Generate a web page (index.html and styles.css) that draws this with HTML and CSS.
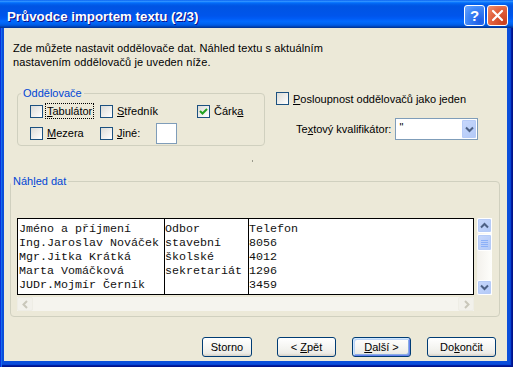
FILE: index.html
```html
<!DOCTYPE html>
<html lang="cs">
<head>
    <meta charset="UTF-8">
    <meta name="viewport" content="width=device-width, initial-scale=1.0">
    <title>Průvodce importem textu (2/3)</title>
    <link rel="stylesheet" href="styles.css">
</head>
<body>
    <div class="window">
        <div class="titlebar">
            <span class="title">Průvodce importem textu (2/3)</span>
            <span class="cap-btn help">?</span>
            <span class="cap-btn close">
                <svg width="19" height="19" viewBox="0 0 19 19"><path d="M5 5 L14 14 M14 5 L5 14" stroke="#fff" stroke-width="2.2" stroke-linecap="round"/></svg>
            </span>
        </div>

        <div class="frame">
            <div class="client">
                <p class="intro">Zde můžete nastavit oddělovače dat. Náhled textu s aktuálním<br>nastavením oddělovačů je uveden níže.</p>

                <div class="options">
                    <fieldset class="group sep-group">
                        <legend>Oddělovače</legend>
                        <div class="check-grid">
                            <label class="check"><span class="box"></span><span class="text focused"><u>T</u>abulátor</span></label>
                            <label class="check"><span class="box"></span><span class="text"><u>S</u>tředník</span></label>
                            <label class="check">
                                <span class="box">
                                    <svg width="11" height="11" viewBox="0 0 11 11"><path d="M2 5 L4.5 7.5 L9 3" fill="none" stroke="#21A121" stroke-width="2"/></svg>
                                </span>
                                <span class="text">Čárk<u>a</u></span>
                            </label>
                            <label class="check"><span class="box"></span><span class="text"><u>M</u>ezera</span></label>
                            <label class="check"><span class="box"></span><span class="text"><u>J</u>iné:</span><span class="textbox"></span></label>
                        </div>
                    </fieldset>

                    <div class="side">
                        <label class="check"><span class="box"></span><span class="text"><u>P</u>osloupnost oddělovačů jako jeden</span></label>
                        <div class="qualifier">
                            <span>Te<u>x</u>tový kvalifikátor:</span>
                            <div class="combo">
                                <span class="combo-text">"</span>
                                <span class="xp-btn combo-btn">
                                    <svg width="9" height="7" viewBox="0 0 9 7"><path d="M1 1.5 L4.5 5 L8 1.5" fill="none" stroke="#4D6185" stroke-width="2"/></svg>
                                </span>
                            </div>
                        </div>
                    </div>
                </div>

                <div class="spacer"><span class="dot"></span></div>

                <fieldset class="group preview-group">
                    <legend>Náh<u>l</u>ed dat</legend>
                    <div class="preview-area">
                        <div class="preview-row">
                            <div class="preview">
                                <div class="col col-name">Jméno a příjmení
Ing.Jaroslav Nováček
Mgr.Jitka Krátká
Marta Vomáčková
JUDr.Mojmír Černík</div>
                                <div class="col col-dept">Odbor
stavební
školské
sekretariát</div>
                                <div class="col col-phone">Telefon
8056
4012
1296
3459</div>
                            </div>
                            <div class="vscroll">
                                <span class="xp-btn sb-btn">
                                    <svg width="9" height="7" viewBox="0 0 9 7"><path d="M1 5.5 L4.5 2 L8 5.5" fill="none" stroke="#4D6185" stroke-width="2"/></svg>
                                </span>
                                <span class="xp-btn thumb">
                                    <svg width="7" height="8" viewBox="0 0 7 8"><path d="M0 1.5 H7 M0 3.5 H7 M0 5.5 H7 M0 7.5 H7" stroke="#8CB0F8" stroke-width="1"/></svg>
                                </span>
                                <span class="track"></span>
                                <span class="xp-btn sb-btn">
                                    <svg width="9" height="7" viewBox="0 0 9 7"><path d="M1 1.5 L4.5 5 L8 1.5" fill="none" stroke="#4D6185" stroke-width="2"/></svg>
                                </span>
                            </div>
                        </div>
                        <div class="hscroll">
                            <span class="sb-off">
                                <svg width="7" height="9" viewBox="0 0 7 9"><path d="M5 1 L1.5 4.5 L5 8" fill="none" stroke="#C9C7BA" stroke-width="2"/></svg>
                            </span>
                            <span class="sb-off">
                                <svg width="7" height="9" viewBox="0 0 7 9"><path d="M2 1 L5.5 4.5 L2 8" fill="none" stroke="#C9C7BA" stroke-width="2"/></svg>
                            </span>
                        </div>
                    </div>
                </fieldset>

                <div class="buttons">
                    <button class="btn btn-cancel">Storno</button>
                    <button class="btn btn-back">&lt; <u>Z</u>pět</button>
                    <button class="btn btn-next default"><u>D</u>alší &gt;</button>
                    <button class="btn btn-finish">Do<u>k</u>ončit</button>
                </div>
            </div>
        </div>
    </div>
</body>
</html>
```

FILE: styles.css
```css
body {
    margin: 0;
    font-family: "Liberation Sans", Arial, sans-serif;
    font-size: 11px;
    color: #000;
    background: #fff;
}

.window {
    width: 513px;
    height: 367px;
    display: flex;
    flex-direction: column;
}

/* title bar */
.titlebar {
    height: 28px;
    box-sizing: border-box;
    display: flex;
    align-items: flex-start;
    padding: 5px 5px 0 7px;
    background: linear-gradient(#0058EE 0%, #3593FF 4%, #288EFF 6%, #127DFF 8%, #036FFC 10%, #0262EE 14%, #0057E5 20%, #0054E3 24%, #0055EB 56%, #005BF5 66%, #026AFE 76%, #0062EF 86%, #0052D6 92%, #0040AB 96%, #003092 100%);
}

.title {
    flex: 1;
    color: #fff;
    font-weight: bold;
    font-size: 13.3px;
    line-height: 23px;
    text-shadow: 1px 1px #0F1089;
}

.cap-btn {
    width: 21px;
    height: 21px;
    box-sizing: border-box;
    border: 1px solid #fff;
    border-radius: 3px;
    display: flex;
    align-items: center;
    justify-content: center;
}

.help {
    background: radial-gradient(circle at 80% 80%, #1C5CE6 0%, #3E86F7 60%, #6BA6FF 100%);
    color: #fff;
    font-weight: bold;
    font-size: 15px;
    line-height: 19px;
}

.close {
    margin-left: 2px;
    background: radial-gradient(circle at 85% 85%, #C9401F 0%, #E1603D 55%, #F0926F 100%);
}

/* frame + client */
.frame {
    flex: 1;
    display: flex;
    padding: 0 6px 6px 4px;
    background: #0A4EDB;
    box-shadow: inset 1px 0 #0831D9, inset 2px 0 #166AEE, inset -1px -1px #00138C, inset -2px -2px #001EA0, inset -3px -3px #0846D5;
}

.client {
    flex: 1;
    background: #ECE9D8;
}

.intro {
    margin: 13px 0 0 9px;
    line-height: 14px;
    letter-spacing: 0.1px;
}

.options {
    display: flex;
    align-items: flex-start;
    margin-top: 18px;
    padding-left: 13px;
}

.group {
    margin: 0;
    padding: 0;
    border: 1px solid #D0D0BF;
    border-radius: 4px;
    min-width: 0;
    box-sizing: border-box;
}

.group legend {
    padding: 0 2px;
    line-height: 12px;
    color: #0046D5;
}

.sep-group {
    width: 248px;
    padding: 1px 0 1px 0;
}

.sep-group legend {
    margin-left: 3px;
}

.check-grid {
    display: grid;
    grid-template-columns: 70px 97px auto;
    grid-auto-rows: 22px;
    align-items: center;
    padding-left: 12px;
}

.check {
    display: flex;
    align-items: center;
}

.box {
    width: 13px;
    height: 13px;
    box-sizing: border-box;
    border: 1px solid #1C5180;
    background: linear-gradient(135deg, #DCDCD7, #FFFFFF);
    flex: none;
    display: flex;
    align-items: center;
    justify-content: center;
}

.text {
    margin-left: 2px;
    padding: 0 1px;
    border: 1px dotted transparent;
    line-height: 14px;
    white-space: nowrap;
}

.focused {
    border-color: #000;
}

.textbox {
    width: 21px;
    height: 21px;
    box-sizing: border-box;
    margin-left: 14px;
    border: 1px solid #7F9DB9;
    background: #fff;
}

.side {
    margin-left: 11px;
    padding-top: 5px;
}

.side .check {
    height: 13px;
}

.qualifier {
    display: flex;
    align-items: center;
    margin: 13px 0 0 20px;
}

.combo {
    width: 83px;
    height: 22px;
    box-sizing: border-box;
    margin-left: 4px;
    border: 1px solid #7F9DB9;
    background: #fff;
    display: flex;
    justify-content: space-between;
}

.combo-text {
    padding: 1px 0 0 3px;
    line-height: 14px;
}

/* XP blue buttons (combo, scrollbar) */
.xp-btn {
    box-sizing: border-box;
    border: 1px solid #fff;
    border-radius: 2px;
    background: linear-gradient(135deg, #C8D8FC, #B2C9F7);
    box-shadow: 0 0 0 1px #B6CBF7 inset;
    display: flex;
    align-items: center;
    justify-content: center;
    flex: none;
}

.combo-btn {
    width: 16px;
    height: 20px;
}

.spacer {
    height: 29px;
    box-sizing: border-box;
    padding: 14px 0 0 248px;
}

.dot {
    display: block;
    width: 1px;
    height: 2px;
    background: #9A9A8C;
}

/* data preview */
.preview-group {
    width: 490px;
    margin-left: 6px;
}

.preview-area {
    padding: 31px 0 5px 6px;
}

.preview-row {
    display: flex;
    height: 77px;
}

.preview {
    width: 457px;
    box-sizing: border-box;
    border: 1px solid #000;
    background: #fff;
    display: flex;
    font-family: "Liberation Mono", "Courier New", monospace;
    font-size: 11.67px;
    line-height: 14px;
    color: #111;
}

.col {
    white-space: pre;
    padding-top: 3px;
}

.col + .col {
    border-left: 1px solid #000;
}

.col-name {
    width: 145px;
    padding-left: 1px;
}

.col-dept {
    width: 83px;
}

.col-phone {
    flex: 1;
}

.vscroll {
    width: 15px;
    margin-left: 3px;
    display: flex;
    flex-direction: column;
    background: linear-gradient(90deg, #F3F1EC, #FEFEFB);
}

.sb-btn {
    height: 15px;
}

.thumb {
    height: 17px;
    margin-top: 1px;
}

.track {
    flex: 1;
}

.hscroll {
    width: 457px;
    height: 14px;
    margin-top: 2px;
    display: flex;
    justify-content: space-between;
    background: #F5F4EE;
}

.sb-off {
    width: 16px;
    box-sizing: border-box;
    border: 1px solid #EEEDE5;
    border-radius: 2px;
    background: #F2F1EB;
    display: flex;
    align-items: center;
    justify-content: center;
}

/* dialog buttons */
.buttons {
    display: flex;
    justify-content: flex-end;
    margin-top: 20px;
    padding-right: 11px;
}

.btn {
    height: 20px;
    box-sizing: border-box;
    padding: 0;
    margin-left: 16px;
    font-family: inherit;
    font-size: 11px;
    color: #000;
    border: 1px solid #003C74;
    border-radius: 3px;
    background: linear-gradient(#FFFFFF, #F3F3EF 60%, #ECEBE6 85%, #D6D0C5);
}

.default {
    box-shadow: inset 1px 1px #CEE7FF, inset -1px -1px #6982EE, inset 2px 2px #BCD4F6, inset -2px -2px #89ADE4;
}

.btn-cancel { width: 50px; margin-left: 0; }
.btn-back { width: 59px; margin-left: 25px; }
.btn-next { width: 59px; }
.btn-finish { width: 69px; }
```
